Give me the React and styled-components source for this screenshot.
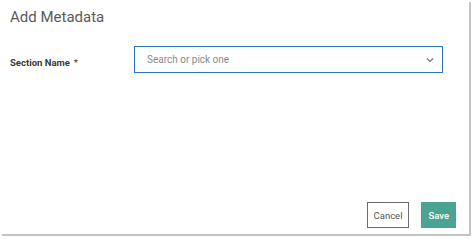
import React from 'react';
import styled, { createGlobalStyle } from 'styled-components';

const GlobalStyle = createGlobalStyle`
  html, body {
    margin: 0;
    padding: 0;
    background: #ffffff;
    font-family: Roboto, 'Liberation Sans', sans-serif;
  }
`;

const Page = styled.div`
  width: 474px;
  height: 239px;
  background: #ffffff;
  padding: 0 3px 3px 0;
  box-sizing: border-box;
`;

const Dialog = styled.div`
  width: 469px;
  height: 234px;
  background: #ffffff;
  box-shadow: 2px 2px 0 #c4c4c4;
  display: flex;
  flex-direction: column;
  box-sizing: border-box;
`;

const Title = styled.h2`
  margin: 0;
  padding: 8px 10px 0 10px;
  font-size: 15px;
  font-weight: 400;
  color: #5a5a5a;
  line-height: 18px;
`;

const Body = styled.div`
  flex: 1;
  padding: 20px 10px 0 10px;
`;

const FieldRow = styled.div`
  display: flex;
  align-items: center;
`;

const Label = styled.label`
  width: 124px;
  font-size: 9.5px;
  font-weight: 700;
  color: #3a3a3a;
  padding-top: 5px;
`;

const Required = styled.span`
  margin-left: 4px;
  font-weight: 400;
`;

const SelectBox = styled.div`
  width: 309px;
  height: 27px;
  box-sizing: border-box;
  border: 1.5px solid #2b74c6;
  display: flex;
  align-items: center;
  justify-content: space-between;
  padding: 0 8px 0 12px;
`;

const Placeholder = styled.span`
  font-size: 10px;
  color: #8a8a8a;
`;

const Footer = styled.div`
  display: flex;
  justify-content: flex-end;
  gap: 12px;
  padding: 0 13px 6px 0;
`;

const Button = styled.button`
  height: 26px;
  box-sizing: border-box;
  font-family: Roboto, 'Liberation Sans', sans-serif;
  font-size: 9.5px;
  padding: 0 ${(p) => (p.primary ? '7px' : '6px')};
  cursor: pointer;
  border: ${(p) => (p.primary ? 'none' : '1px solid #6b6b6b')};
  background: ${(p) => (p.primary ? '#4ba392' : '#ffffff')};
  color: ${(p) => (p.primary ? '#ffffff' : '#555')};
  font-weight: ${(p) => (p.primary ? 500 : 400)};
`;

export default function App() {
  return (
    <Page>
      <GlobalStyle />
      <Dialog>
        <Title>Add Metadata</Title>
        <Body>
          <FieldRow>
            <Label>
              Section Name<Required>*</Required>
            </Label>
            <SelectBox>
              <Placeholder>Search or pick one</Placeholder>
              <svg width="8" height="6" viewBox="0 0 8 6">
                <path d="M1 1.5 L4 4.5 L7 1.5" stroke="#777" strokeWidth="1.2" fill="none" />
              </svg>
            </SelectBox>
          </FieldRow>
        </Body>
        <Footer>
          <Button>Cancel</Button>
          <Button primary>Save</Button>
        </Footer>
      </Dialog>
    </Page>
  );
}
